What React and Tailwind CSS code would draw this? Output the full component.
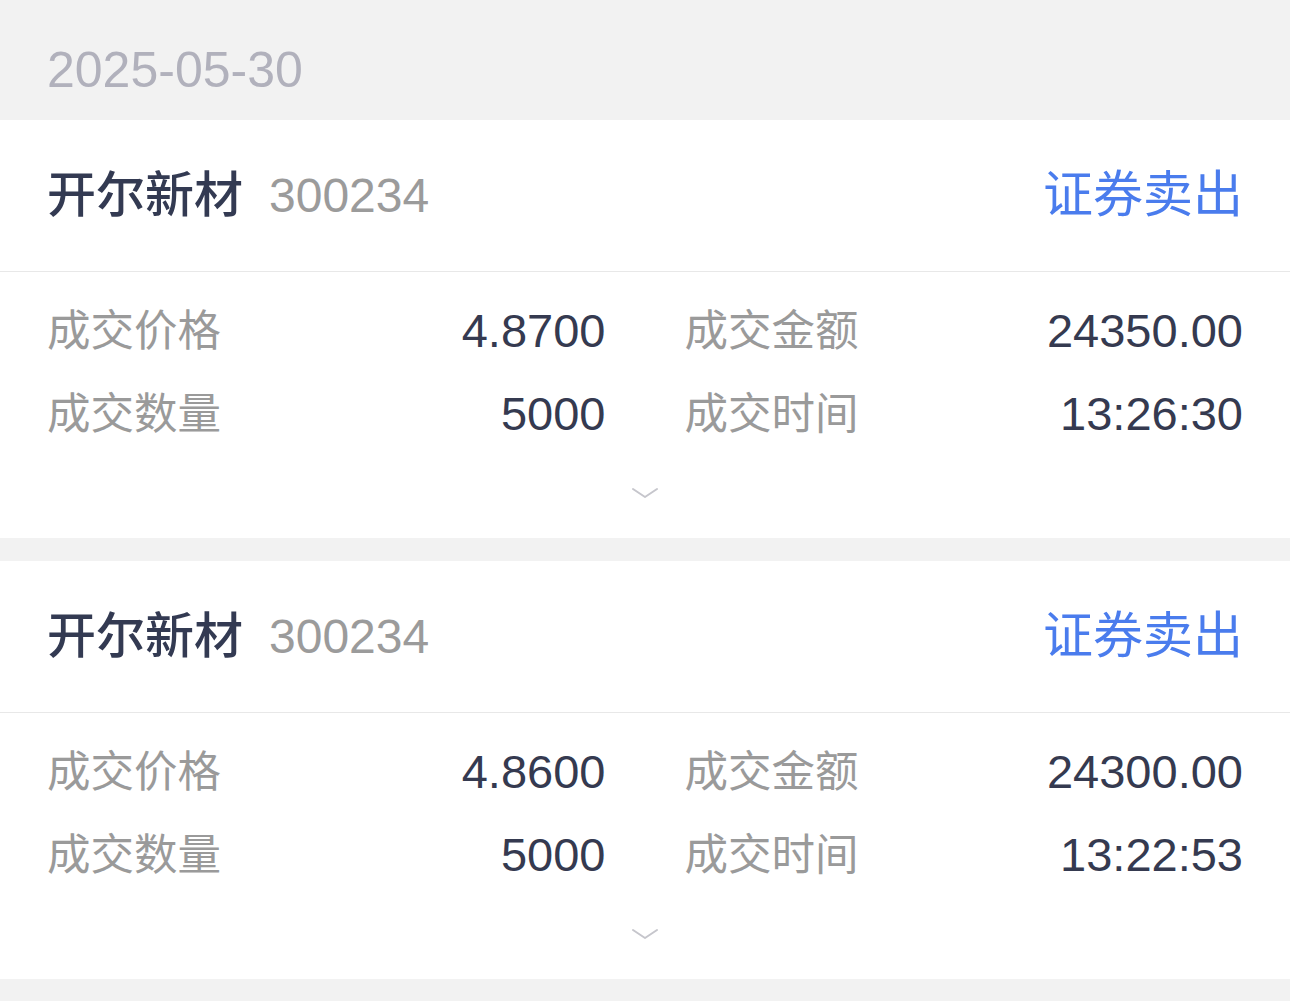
import React from "react";

const trades = [
  { price: "4.8700", amount: "24350.00", qty: "5000", time: "13:26:30" },
  { price: "4.8600", amount: "24300.00", qty: "5000", time: "13:22:53" },
];

function Cell({ label, value }) {
  return (
    <div className="flex items-center justify-between">
      <span className="text-[43.5px] text-[#9a9a9a]">{label}</span>
      <span className="text-[47px] text-[#353a50]">{value}</span>
    </div>
  );
}

function TradeCard({ trade }) {
  return (
    <div className="bg-white">
      <div className="h-[152px] px-[47px] flex items-center justify-between border-b border-[#e8e8e8]">
        <div className="flex items-center gap-[26px]">
          <span className="text-[49px] font-medium text-[#333a52]">开尔新材</span>
          <span className="text-[48px] text-[#9b9b9b]">300234</span>
        </div>
        <span className="text-[50px] text-[#4a7ced]">证券卖出</span>
      </div>
      <div className="pt-[18px] px-[47px]">
        <div className="grid grid-cols-2 gap-x-[79px]">
          <div className="h-[83px] flex flex-col justify-center">
            <Cell label="成交价格" value={trade.price} />
          </div>
          <div className="h-[83px] flex flex-col justify-center">
            <Cell label="成交金额" value={trade.amount} />
          </div>
          <div className="h-[83px] flex flex-col justify-center">
            <Cell label="成交数量" value={trade.qty} />
          </div>
          <div className="h-[83px] flex flex-col justify-center">
            <Cell label="成交时间" value={trade.time} />
          </div>
        </div>
      </div>
      <div className="flex justify-center pt-[31px] pb-[39px]">
        <svg width="26" height="12" viewBox="0 0 26 12" fill="none">
          <path d="M1 2 L13 10 L25 2" stroke="#c6c6cc" strokeWidth="2" strokeLinecap="round" strokeLinejoin="round" />
        </svg>
      </div>
    </div>
  );
}

export default function App() {
  return (
    <div
      className="min-h-screen bg-[#f2f2f2] w-[1290px] h-[1001px] overflow-hidden"
      style={{ fontFamily: '"Liberation Sans", "Noto Sans CJK SC", sans-serif' }}
    >
      <div className="h-[120px] pt-[20px] px-[47px] flex items-center">
        <span className="text-[50px] text-[#b1b1bc]">2025-05-30</span>
      </div>
      <div className="flex flex-col gap-[23px]">
        {trades.map((t, i) => (
          <TradeCard key={i} trade={t} />
        ))}
      </div>
    </div>
  );
}
